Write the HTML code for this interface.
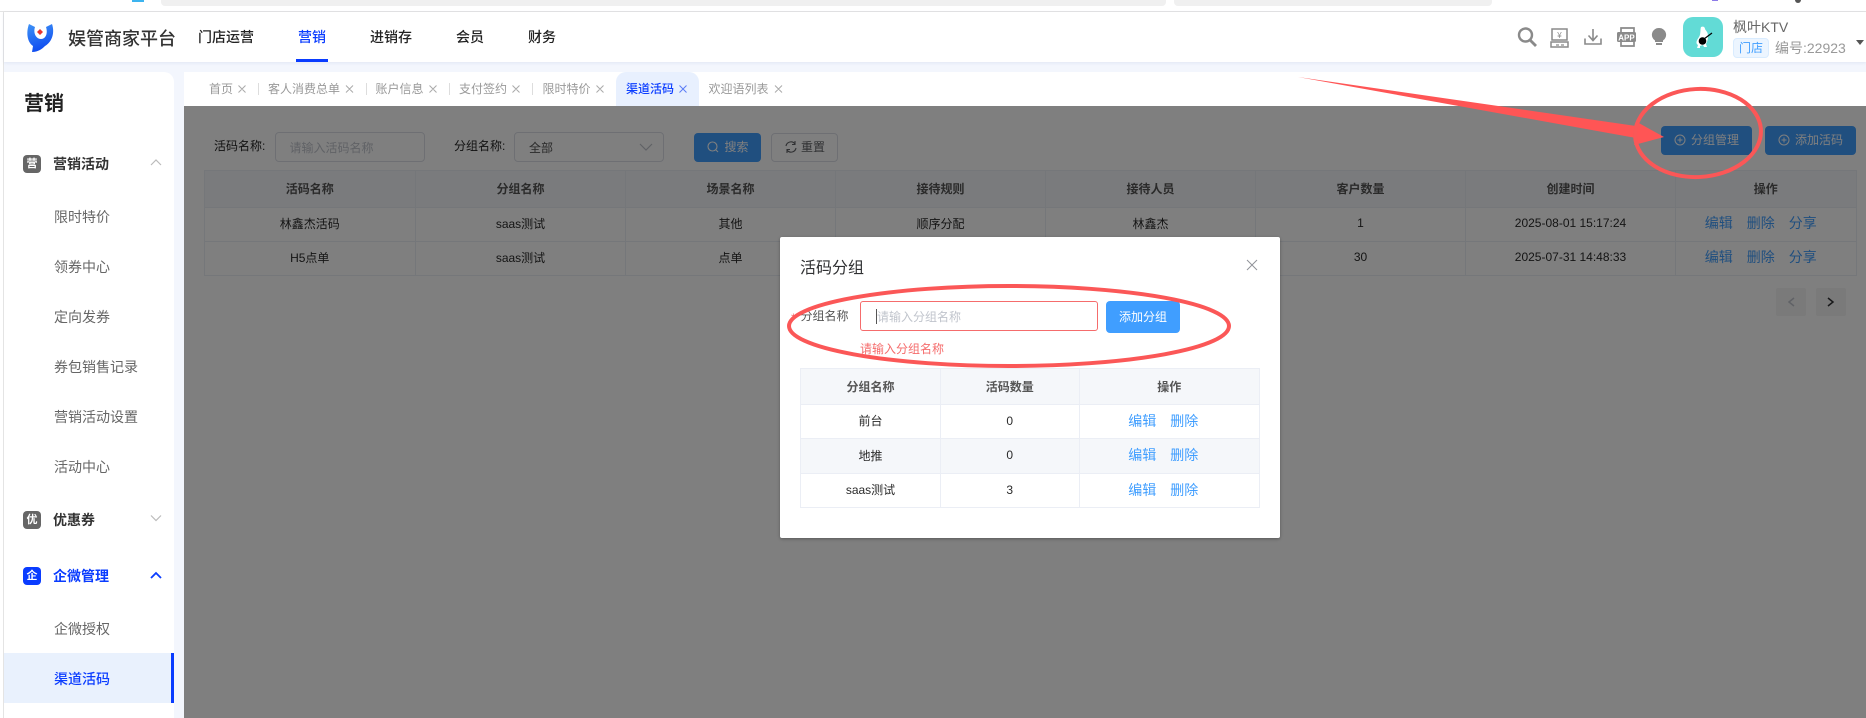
<!DOCTYPE html>
<html lang="zh"><head><meta charset="utf-8"><title>渠道活码</title>
<style>
*{box-sizing:border-box}
html,body{margin:0;padding:0;width:1866px;height:718px;overflow:hidden;background:#fff;font-family:"Liberation Sans","Noto Sans CJK SC",sans-serif;font-size:12px;color:#333}
.a{position:absolute}
.t{position:absolute;white-space:nowrap;height:20px;line-height:20px}
.nav{font-size:14px;font-weight:500;color:#222}
.sub{font-size:14px;color:#666;left:54px}
.grp{font-size:14px;font-weight:700;color:#333;left:53px}
.ic{position:absolute;left:23px;width:18px;height:18px;border-radius:4px;background:#666;color:#fff;font-size:11px;font-weight:700;text-align:center;line-height:18px}
.tab{color:#999;font-size:12px;top:79px}
.sep{position:absolute;top:83px;width:1px;height:12px;background:#ddd}
table{border-collapse:collapse;table-layout:fixed;position:absolute}
td,th{border:1px solid #ebeef5;text-align:center;font-size:12px;padding:0;color:#2a2a2a}
td{padding-bottom:2px}
th{background:#f5f7fa;font-weight:700;color:#555}
.l{font-size:14px;color:#409eff}
.l+.l{margin-left:14px}
.op1{padding-right:10px}
.op2{padding-right:12px}
.btn{position:absolute;border-radius:4px;background:#409eff;color:#fff;text-align:center}
</style></head><body>

<!-- browser strip -->
<div class="a" style="left:161px;top:0;width:1005px;height:6px;background:#f0f0f0;border-radius:0 0 4px 4px"></div>
<div class="a" style="left:1174px;top:0;width:318px;height:6px;background:#f0f0f0;border-radius:0 0 4px 4px"></div>
<div class="a" style="left:132px;top:0;width:12px;height:2px;background:#3db4ef"></div>
<div class="a" style="left:1712px;top:0;width:6px;height:1px;background:#8d7be8"></div>
<div class="a" style="left:1795px;top:0;width:6px;height:3px;background:#555;border-radius:0 0 3px 3px"></div>
<div class="a" style="left:0;top:11px;width:1866px;height:1px;background:#e4e4e4"></div>
<div class="a" style="left:3px;top:12px;width:1px;height:706px;background:#e4e4e4"></div>

<!-- page bg -->
<div class="a" style="left:4px;top:62px;width:1862px;height:656px;background:#f3f6fd"></div>

<!-- header -->
<div class="a" style="left:4px;top:12px;width:1862px;height:50px;background:#fff;box-shadow:0 1px 3px rgba(120,140,190,.15)"></div>
<svg class="a" style="left:0;top:0" width="70" height="62">
<defs><linearGradient id="g" x1="0" y1="0" x2="0.300" y2="1"><stop offset="0" stop-color="#3f93f6"/><stop offset="1" stop-color="#0f4cf0"/></linearGradient></defs>
<path d="M29 24 L35 27 C33 33 36 39 41 39 C46 39 48 33 46 27 L52 24 C55 33 52 42 45 46 C42 49 38 52 32 52 L33 46 C27 42 26 32 29 24Z" fill="url(#g)"/>
<path d="M40 29 L43 32 L40 35 L37 32Z" fill="#e8342e"/>
</svg>
<div class="t" style="left:68px;top:29px;font-size:18px;font-weight:500;color:#333">娱管商家平台</div>
<div class="t nav" style="left:198px;top:27px">门店运营</div>
<div class="t nav" style="left:298px;top:27px;color:#0a3cff">营销</div>
<div class="a" style="left:296px;top:59px;width:32px;height:3px;background:#0a3cff"></div>
<div class="t nav" style="left:370px;top:27px">进销存</div>
<div class="t nav" style="left:456px;top:27px">会员</div>
<div class="t nav" style="left:528px;top:27px">财务</div>

<!-- header icons -->
<svg class="a" style="left:1510px;top:20px" width="170" height="36" fill="none" stroke="#8a8a8a" stroke-width="2">
<circle cx="15.500" cy="15" r="6.500" stroke-width="2.400"/><path d="M20 20l6 6" stroke-width="2.800"/>
<path d="M42 9h15v11h-15zM41 22h17v5h-17z" stroke-width="1.500"/><path d="M46 25h3M51 25h3" stroke-width="1.200"/>
<text x="49.500" y="18" font-size="8" font-family="Liberation Sans" fill="#8a8a8a" stroke="none" text-anchor="middle">¥</text>
<path d="M83 9v11M78.500 15.500l4.500 5 4.500-5M75 18.500v5.500h16v-5.500" stroke-width="1.600"/>
<path d="M111 12V8h13v4M111 22v4h13v-4" stroke-width="1.700"/>
<rect x="107" y="12" width="19" height="10" rx="1.500" fill="#8a8a8a" stroke="none"/>
<text x="116.500" y="20.500" font-size="8" font-weight="700" font-family="Liberation Sans" fill="#fff" stroke="none" text-anchor="middle">APP</text>
<path d="M149 8a6.800 6.800 0 0 1 4 12.500V22h-8v-1.500A6.800 6.800 0 0 1 149 8z" fill="#8a8a8a" stroke="none"/>
<path d="M146 24h6" stroke-width="2"/>
</svg>
<!-- avatar -->
<div class="a" style="left:1683px;top:17px;width:40px;height:40px;border-radius:10px;background:#62dbd6"></div>
<svg class="a" style="left:1683px;top:17px" width="40" height="40">
<path d="M18 10c2-1 4 0 4 2 1 2 3 3 3 7 0 4-1 6-2 8l1 3h-3l-1-2-3 1 0 2h-3l1-3c-3-2-1-5 1-8 2-3 1-7 2-10z" fill="#fff"/>
<circle cx="19.500" cy="24" r="3.800" fill="#000"/><path d="M21 22l8-6" stroke="#000" stroke-width="1.200"/>
</svg>
<div class="t" style="left:1733px;top:17px;font-size:14px;color:#666">枫叶KTV</div>
<div class="a" style="left:1733px;top:38px;width:36px;height:20px;background:#ecf5ff;border:1px solid #d9ecff;border-radius:4px;color:#409eff;font-size:12px;line-height:18px;text-align:center">门店</div>
<div class="t" style="left:1775px;top:38px;font-size:14px;color:#999">编号:22923</div>
<div class="a" style="left:1856px;top:40px;width:0;height:0;border-left:4.500px solid transparent;border-right:4.500px solid transparent;border-top:5px solid #555"></div>

<!-- sidebar -->
<div class="a" style="left:4px;top:72px;width:170px;height:646px;background:#fff;border-radius:0 10px 0 0"></div>
<div class="t" style="left:24px;top:94px;font-size:20px;font-weight:700;color:#222">营销</div>
<div class="ic" style="top:155px">营</div>
<div class="t grp" style="top:154px">营销活动</div>
<div class="t sub" style="top:207px">限时特价</div>
<div class="t sub" style="top:257px">领券中心</div>
<div class="t sub" style="top:307px">定向发券</div>
<div class="t sub" style="top:357px">券包销售记录</div>
<div class="t sub" style="top:407px">营销活动设置</div>
<div class="t sub" style="top:457px">活动中心</div>
<div class="ic" style="top:511px">优</div>
<div class="t grp" style="top:510px">优惠券</div>
<div class="ic" style="top:567px;background:#0a3cff">企</div>
<div class="t grp" style="top:566px;color:#0a3cff">企微管理</div>
<div class="t sub" style="top:619px">企微授权</div>
<div class="a" style="left:4px;top:653px;width:170px;height:50px;background:#e9f1fd"></div>
<div class="a" style="left:171px;top:653px;width:3px;height:50px;background:#0a3cff"></div>
<div class="t sub" style="top:669px;color:#0a3cff;font-weight:500">渠道活码</div>
<svg class="a" style="left:145px;top:150px" width="24" height="440" fill="none" stroke="#bbb" stroke-width="1.200">
<path d="M6 15l5-5 5 5"/>
<path d="M6 365.500l5 5 5-5"/>
<path d="M6 428l5-5 5 5" stroke="#0a3cff" stroke-width="1.800"/>
</svg>

<!-- tabs -->
<div class="a" style="left:184px;top:72px;width:1682px;height:34px;background:#fff"></div>
<div class="a" style="left:616px;top:72px;width:83px;height:34px;background:#e8f0fe;border-radius:10px 10px 0 0"></div>
<div class="t tab" style="left:209px">首页</div>
<div class="t tab" style="left:268px">客人消费总单</div>
<div class="t tab" style="left:375.500px">账户信息</div>
<div class="t tab" style="left:459px">支付签约</div>
<div class="t tab" style="left:542.500px">限时特价</div>
<div class="t tab" style="left:626px;color:#0a3cff;font-weight:500">渠道活码</div>
<div class="t tab" style="left:708.500px">欢迎语列表</div>
<div class="sep" style="left:258px"></div><div class="sep" style="left:366px"></div><div class="sep" style="left:449px"></div><div class="sep" style="left:532px"></div>
<svg class="a" style="left:0;top:80px" width="800" height="20" fill="none" stroke="#aaa" stroke-width="1">
<path d="M238.500 5.500l7 7m0-7l-7 7M346 5.500l7 7m0-7l-7 7M429.500 5.500l7 7m0-7l-7 7M512.500 5.500l7 7m0-7l-7 7M596.500 5.500l7 7m0-7l-7 7M775 5.500l7 7m0-7l-7 7"/>
<path d="M679.500 5.500l7 7m0-7l-7 7" stroke="#5a7cf5"/>
</svg>

<!-- main content -->
<div class="a" style="left:184px;top:106px;width:1682px;height:612px;background:#fff"></div>
<div class="t" style="left:214px;top:136px;color:#222">活码名称:</div>
<div class="a" style="left:274.500px;top:132px;width:150px;height:30px;border:1px solid #dcdfe6;border-radius:4px"></div>
<div class="t" style="left:289.500px;top:138px;color:#c0c4cc;font-size:12px">请输入活码名称</div>
<div class="t" style="left:454px;top:136px;color:#222">分组名称:</div>
<div class="a" style="left:514px;top:132px;width:150px;height:30px;border:1px solid #dcdfe6;border-radius:4px"></div>
<div class="t" style="left:529px;top:138px;color:#555">全部</div>
<svg class="a" style="left:638px;top:142px" width="16" height="12" fill="none" stroke="#c0c4cc" stroke-width="1.200"><path d="M2 2l6 6 6-6"/></svg>
<div class="btn" style="left:694px;top:133px;width:67px;height:29px;line-height:29px;padding-left:18px">搜索</div>
<svg class="a" style="left:706px;top:140px" width="14" height="14" fill="none" stroke="#fff" stroke-width="1.100"><circle cx="6.500" cy="6.500" r="4.500"/><path d="M10 10l2 2"/></svg>
<div class="a" style="left:771px;top:133px;width:67px;height:29px;border:1px solid #dcdfe6;border-radius:4px;line-height:27px;padding-left:29px;color:#606266">重置</div>
<svg class="a" style="left:784px;top:140px" width="14" height="14" fill="none" stroke="#606266" stroke-width="1.100"><path d="M2 6a5 5 0 0 1 9-2M12 8a5 5 0 0 1-9 2"/><path d="M11 1v3.500H8M3 13V9.500h3"/></svg>
<div class="btn" style="left:1661px;top:126px;width:91px;height:29px;line-height:29px;padding-left:17px">分组管理</div>
<div class="btn" style="left:1765px;top:126px;width:91px;height:29px;line-height:29px;padding-left:17px">添加活码</div>
<svg class="a" style="left:1670px;top:133px" width="190" height="14" fill="none" stroke="#fff" stroke-width="1"><circle cx="10" cy="7" r="5"/><path d="M10 4.500v5M7.500 7h5"/><circle cx="114" cy="7" r="5"/><path d="M114 4.500v5M111.500 7h5"/></svg>

<table style="left:203.500px;top:170px;width:1652px">
<colgroup><col style="width:211.500px"><col style="width:210px"><col style="width:210px"><col style="width:210px"><col style="width:210px"><col style="width:210px"><col style="width:210px"><col style="width:180.500px"></colgroup>
<tr style="height:36.500px"><th>活码名称</th><th>分组名称</th><th>场景名称</th><th>接待规则</th><th>接待人员</th><th>客户数量</th><th>创建时间</th><th>操作</th></tr>
<tr style="height:34px"><td>林鑫杰活码</td><td>saas测试</td><td>其他</td><td>顺序分配</td><td>林鑫杰</td><td>1</td><td>2025-08-01 15:17:24</td><td class="op1"><span class="l">编辑</span><span class="l">删除</span><span class="l">分享</span></td></tr>
<tr style="height:34.500px"><td>H5点单</td><td>saas测试</td><td>点单</td><td></td><td></td><td>30</td><td>2025-07-31 14:48:33</td><td class="op1"><span class="l">编辑</span><span class="l">删除</span><span class="l">分享</span></td></tr>
</table>
<div class="a" style="left:1776px;top:288px;width:30px;height:28px;background:#f4f4f5;border-radius:2px"></div>
<div class="a" style="left:1816px;top:288px;width:30px;height:28px;background:#f4f4f5;border-radius:2px"></div>
<svg class="a" style="left:1776px;top:288px" width="70" height="28" fill="none" stroke-width="1.500"><path d="M18 10l-5 4 5 4" stroke="#c0c4cc"/><path d="M52 10l5 4-5 4" stroke="#303133"/></svg>

<!-- overlay -->
<div class="a" style="left:184px;top:106px;width:1682px;height:612px;background:rgba(0,0,0,.5)"></div>

<!-- modal -->
<div class="a" style="left:780px;top:237px;width:500px;height:301px;background:#fff;border-radius:2px;box-shadow:0 1px 3px rgba(0,0,0,.3)"></div>
<div class="t" style="left:800px;top:259px;font-size:16px;color:#303133">活码分组</div>
<svg class="a" style="left:1245px;top:258px" width="14" height="14" fill="none" stroke="#909399" stroke-width="1"><path d="M2 2l10 10M12 2L2 12"/></svg>
<div class="t" style="left:791px;top:308px;color:#f56c6c">*</div>
<div class="t" style="left:800.500px;top:306px;color:#555">分组名称</div>
<div class="a" style="left:860px;top:301px;width:238px;height:30px;border:1px solid #f56c6c;border-radius:3px"></div>
<div class="a" style="left:876px;top:309px;width:1px;height:15px;background:#555"></div>
<div class="t" style="left:877px;top:307px;color:#c0c4cc">请输入分组名称</div>
<div class="btn" style="left:1106px;top:301px;width:74px;height:32px;line-height:32px">添加分组</div>
<div class="t" style="left:860px;top:339px;color:#f56c6c">请输入分组名称</div>
<table style="left:800px;top:368px;width:459px">
<colgroup><col style="width:140px"><col style="width:138.500px"><col style="width:180.500px"></colgroup>
<tr style="height:36px"><th>分组名称</th><th>活码数量</th><th>操作</th></tr>
<tr style="height:34px"><td>前台</td><td>0</td><td class="op2"><span class="l">编辑</span><span class="l">删除</span></td></tr>
<tr style="height:35px;background:#f5f7fa"><td>地推</td><td>0</td><td class="op2"><span class="l">编辑</span><span class="l">删除</span></td></tr>
<tr style="height:34px"><td>saas测试</td><td>3</td><td class="op2"><span class="l">编辑</span><span class="l">删除</span></td></tr>
</table>

<!-- annotations -->
<svg class="a" style="left:0;top:0" width="1866" height="718" fill="none">
<polygon points="1298,77 1636,126 1637,122 1664,137 1634,145 1636,138" fill="#ff5555"/>
<ellipse cx="1698" cy="133" rx="63" ry="44" stroke="#fb5757" stroke-width="4" transform="rotate(-3 1698 133)"/>
<ellipse cx="1009" cy="326" rx="220" ry="40" stroke="#fb5757" stroke-width="4"/>
</svg>
</body></html>
